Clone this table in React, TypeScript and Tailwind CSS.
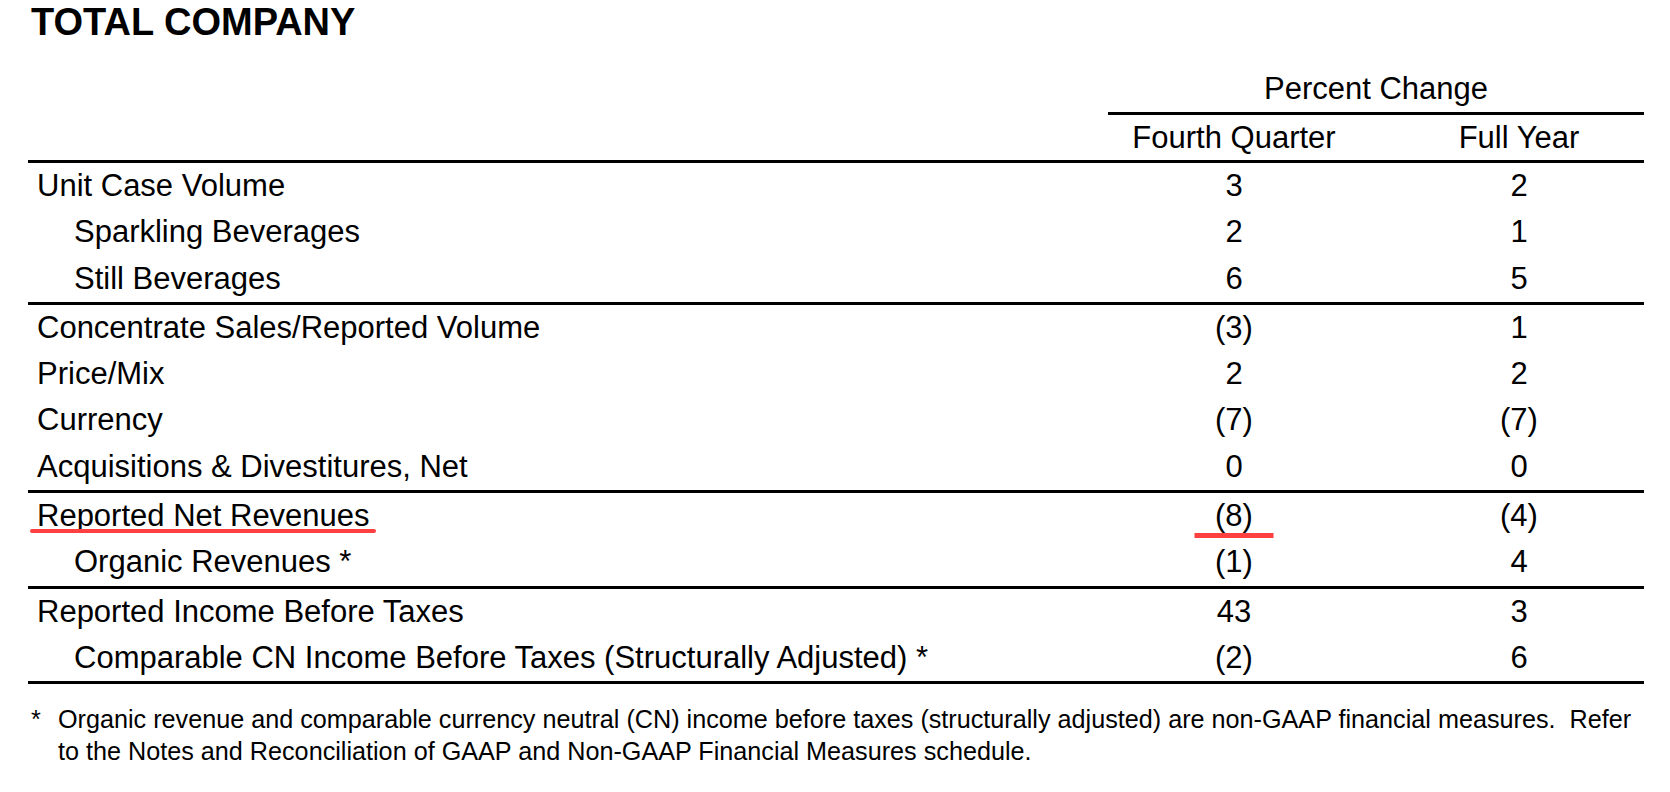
type Row = {
  label: string;
  q4: string;
  fy: string;
  indent?: boolean;
  mark?: boolean;
};

const groups: Row[][] = [
  [
    { label: "Unit Case Volume", q4: "3", fy: "2" },
    { label: "Sparkling Beverages", q4: "2", fy: "1", indent: true },
    { label: "Still Beverages", q4: "6", fy: "5", indent: true },
  ],
  [
    { label: "Concentrate Sales/Reported Volume", q4: "(3)", fy: "1" },
    { label: "Price/Mix", q4: "2", fy: "2" },
    { label: "Currency", q4: "(7)", fy: "(7)" },
    { label: "Acquisitions & Divestitures, Net", q4: "0", fy: "0" },
  ],
  [
    { label: "Reported Net Revenues", q4: "(8)", fy: "(4)", mark: true },
    { label: "Organic Revenues *", q4: "(1)", fy: "4", indent: true },
  ],
  [
    { label: "Reported Income Before Taxes", q4: "43", fy: "3" },
    {
      label: "Comparable CN Income Before Taxes (Structurally Adjusted) *",
      q4: "(2)",
      fy: "6",
      indent: true,
    },
  ],
];

function DataRow({ row }: { row: Row }) {
  return (
    <div className="flex h-[46.3px] leading-[46px]">
      <div className={row.indent ? "w-[1080px] pl-[46px]" : "w-[1080px] pl-[9px]"}>
        {row.mark ? (
          <span className="relative inline-block">
            {row.label}
            {/* red annotation stroke */}
            <span className="absolute left-[-7px] right-[-6px] top-[36px] h-[4px] rounded-full bg-[#ff4040]" />
          </span>
        ) : (
          row.label
        )}
      </div>
      <div className="w-[252px] text-center">
        {row.mark ? (
          <span className="relative inline-block">
            {row.q4}
            <span className="absolute left-1/2 top-[40px] h-[4.5px] w-[79px] -translate-x-1/2 bg-[#ff4040]" />
          </span>
        ) : (
          row.q4
        )}
      </div>
      <div className="w-[284px] pl-[34px] text-center">{row.fy}</div>
    </div>
  );
}

export default function App() {
  return (
    <div className="min-h-screen bg-white text-black font-['Liberation_Sans',Arial,sans-serif]">
      <div className="w-[1616px] ml-[28px]">
        {/* Title */}
        <div className="h-[44px] pl-[3px] text-[38px] font-bold leading-[44px]">TOTAL COMPANY</div>

        {/* Column headers */}
        <div className="flex h-[71px] items-end text-[31px]">
          <div className="w-[1080px]" />
          <div className="w-[536px] border-b-[3px] border-black text-center leading-[46.5px]">
            Percent Change
          </div>
        </div>
        <div className="flex h-[48px] border-b-[3px] border-black text-[31px] leading-[45px]">
          <div className="w-[1080px]" />
          <div className="w-[252px] text-center">Fourth Quarter</div>
          <div className="w-[284px] pl-[34px] text-center">Full Year</div>
        </div>

        {/* Body */}
        <div className="text-[31px]">
          {groups.map((g, i) => (
            <div key={i} className="border-b-[3px] border-black">
              {g.map((r) => (
                <DataRow key={r.label} row={r} />
              ))}
            </div>
          ))}
        </div>

        {/* Footnote */}
        <div className="mt-[19px] flex pl-[3px] text-[25.2px] leading-[32px]">
          <div className="w-[27px] shrink-0">*</div>
          <div className="flex-1">
            Organic revenue and comparable currency neutral (CN) income before taxes (structurally adjusted) are
            non-GAAP financial measures.{"\u00a0"} Refer to the Notes and Reconciliation of GAAP and Non-GAAP
            Financial Measures schedule.
          </div>
        </div>
      </div>
    </div>
  );
}
